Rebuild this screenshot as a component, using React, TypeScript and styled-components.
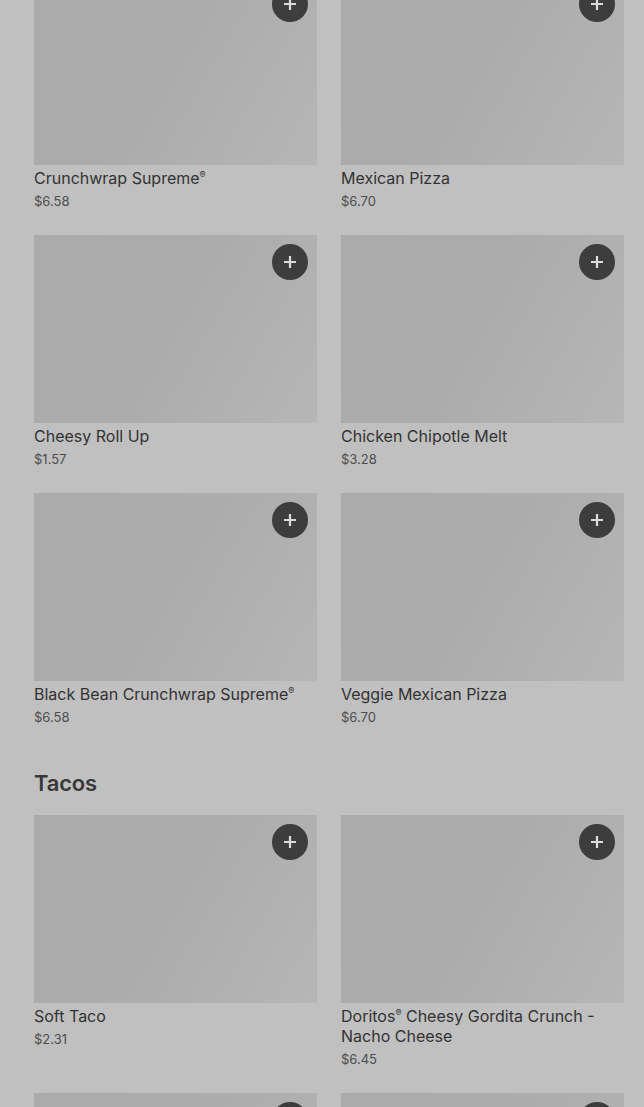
import React from 'react';
import styled, { createGlobalStyle } from 'styled-components';

const GlobalStyle = createGlobalStyle`
  html, body {
    margin: 0;
    padding: 0;
    background: #c0c0c0;
    overflow: hidden;
  }
  body {
    font-family: Inter, "Liberation Sans", sans-serif;
  }
`;

const Page = styled.main`
  margin-top: -23px;
  padding: 0 20px 0 34px;
`;

const Section = styled.section`
  & + & {
    margin-top: 42px;
  }
`;

const SectionTitle = styled.h2`
  margin: 0 0 18px;
  font-size: 22px;
  line-height: 28px;
  font-weight: 600;
  letter-spacing: -0.2px;
  color: #383838;
`;

const Grid = styled.div`
  display: grid;
  grid-template-columns: repeat(2, 283px);
  column-gap: 24px;
  row-gap: 24px;
  align-items: start;
`;

const Card = styled.div`
  display: flex;
  flex-direction: column;
`;

const Thumb = styled.div`
  position: relative;
  height: 188px;
  background: linear-gradient(120deg, #ababab 0%, #acacac 50%, #b6b6b6 100%);
`;

const AddButton = styled.button`
  position: absolute;
  top: 9px;
  right: 9px;
  width: 36px;
  height: 36px;
  border: none;
  border-radius: 50%;
  background: #3d3d3d;
  display: flex;
  align-items: center;
  justify-content: center;
  padding: 0;
  cursor: pointer;
`;

const Name = styled.div`
  margin-top: 3px;
  font-size: 16px;
  line-height: 20px;
  font-weight: 400;
  color: #333333;
`;

const Mark = styled.span`
  font-size: 9px;
  vertical-align: 6px;
  line-height: 0;
`;

const Price = styled.div`
  margin-top: 3px;
  font-size: 13px;
  line-height: 20px;
  font-weight: 400;
  color: #4d4d4d;
`;

const Plus = () => (
  <svg width="14" height="14" viewBox="0 0 14 14">
    <path d="M7 1v12M1 7h12" stroke="#dcdcdc" strokeWidth="2.2" />
  </svg>
);

type Item = { name: string; price: string };

const renderName = (name: string) => {
  const parts = name.split('®');
  return parts.map((p, i) => (
    <React.Fragment key={i}>
      {p}
      {i < parts.length - 1 && <Mark>®</Mark>}
    </React.Fragment>
  ));
};

const MenuCard = ({ name, price }: Item) => (
  <Card>
    <Thumb>
      <AddButton aria-label="Add">
        <Plus />
      </AddButton>
    </Thumb>
    <Name>{renderName(name)}</Name>
    <Price>{price}</Price>
  </Card>
);

const specialties: Item[] = [
  { name: 'Crunchwrap Supreme®', price: '$6.58' },
  { name: 'Mexican Pizza', price: '$6.70' },
  { name: 'Cheesy Roll Up', price: '$1.57' },
  { name: 'Chicken Chipotle Melt', price: '$3.28' },
  { name: 'Black Bean Crunchwrap Supreme®', price: '$6.58' },
  { name: 'Veggie Mexican Pizza', price: '$6.70' },
];

const tacos: Item[] = [
  { name: 'Soft Taco', price: '$2.31' },
  { name: 'Doritos® Cheesy Gordita Crunch - Nacho Cheese', price: '$6.45' },
  { name: 'Crunchy Taco', price: '$2.11' },
  { name: 'Nacho Cheese Doritos® Locos Tacos', price: '$2.64' },
];

export default function App() {
  return (
    <>
      <GlobalStyle />
      <Page>
        <Section>
          <Grid>
            {specialties.map((it) => (
              <MenuCard key={it.name} {...it} />
            ))}
          </Grid>
        </Section>
        <Section>
          <SectionTitle>Tacos</SectionTitle>
          <Grid>
            {tacos.map((it) => (
              <MenuCard key={it.name} {...it} />
            ))}
          </Grid>
        </Section>
      </Page>
    </>
  );
}
